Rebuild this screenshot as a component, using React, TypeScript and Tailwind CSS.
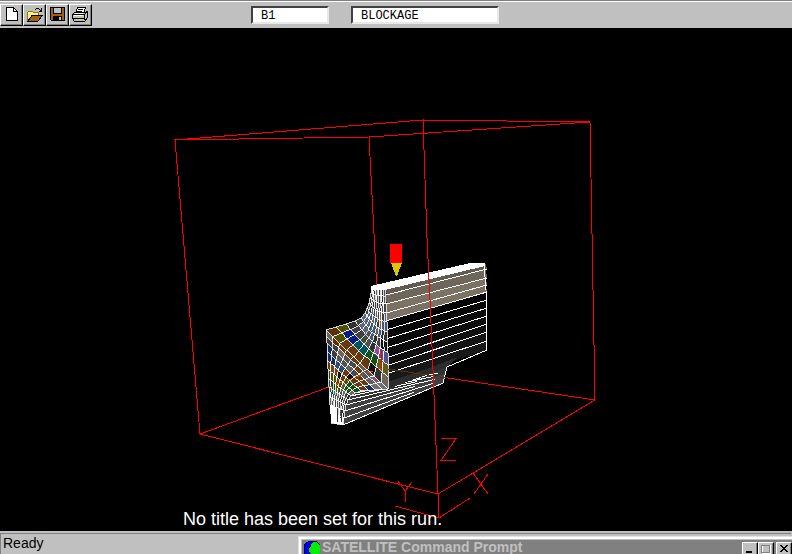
import type { ReactNode } from 'react';

type Point = [number, number];

const lerp = (a: Point, b: Point, t: number): Point => [a[0] + (b[0] - a[0]) * t, a[1] + (b[1] - a[1]) * t];
const toPoints = (points: Point[]) => points.map((p) => p[0].toFixed(1) + ',' + p[1].toFixed(1)).join(' ');

// Walks a polyline by index, so that equal steps fall between its knots.
function along(knots: Point[], t: number): Point {
  const place = t * (knots.length - 1);
  const index = Math.min(Math.floor(place), knots.length - 2);
  return lerp(knots[index], knots[index + 1], place - index);
}

// Outer and inner walls of the curved end face, from the top stub to the foot.
const outerWall: Point[] = [
  [371, 288], [371, 293], [370, 298], [369, 303], [367, 308], [365, 313], [361, 318], [355, 321], [346, 324], [336, 327],
  [326, 330], [326, 336], [327, 343], [327, 351], [327, 360], [328, 369], [328, 378], [329, 387], [329, 396], [330, 405],
  [331, 414], [331, 423],
];
const innerWall: Point[] = [
  [385, 288], [385, 296], [386, 304], [386, 313], [387, 322], [387, 332], [387, 342], [388, 353], [388, 365], [388, 377],
  [388, 389], [382, 389], [375, 390], [368, 390], [361, 391], [355, 393], [351, 396], [348, 400], [346, 405], [345, 411],
  [344, 418], [343, 425],
];

const ROWS = 21;
const COLUMNS = 9;

const cellColours: string[][] = [
  ['#303030', '#505050', '#303030', '#606060', '#404040', '#303030', '#505050', '#303030', '#505050'],
  ['#303030', '#404040', '#606060', '#404040', '#505050', '#303030', '#505050', '#303030', '#505050'],
  ['#303030', '#505050', '#303030', '#404040', '#303030', '#505050', '#303030', '#505050', '#404040'],
  ['#505050', '#303030', '#586478', '#404040', '#606060', '#404040', '#8a6238', '#404040', '#586478'],
  ['#404040', '#586478', '#405878', '#586478', '#505050', '#404040', '#8a6238', '#405878', '#405878'],
  ['#586478', '#586478', '#586478', '#405878', '#405878', '#606060', '#405878', '#303030', '#303030'],
  ['#404040', '#586478', '#586478', '#505050', '#405878', '#303030', '#404040', '#101010', '#101010'],
  ['#303030', '#404040', '#404040', '#48483c', '#505050', '#303030', '#8a509a', '#56508a', '#56508a'],
  ['#505000', '#081c80', '#081c80', '#005462', '#005462', '#105018', '#105018', '#5e5e18', '#5e5e18'],
  ['#5a3008', '#505000', '#643810', '#643810', '#643810', '#643810', '#101010', '#303030', '#6e665a'],
  ['#6e665a', '#5a3008', '#643810', '#643810', '#643810', '#6a5848', '#545454', '#8a5078', '#707070'],
  ['#3c3c3c', '#3c3c3c', '#6e665a', '#505050', '#484848', '#643810', '#545454', '#606060', '#707070'],
  ['#102c58', '#3c3c3c', '#545454', '#505050', '#606060', '#484848', '#643810', '#643810', '#102c58'],
  ['#102c58', '#102c58', '#304a6c', '#304a6c', '#643810', '#101010', '#643810', '#643810', '#643810'],
  ['#643810', '#704418', '#704418', '#101010', '#643810', '#505000', '#105018', '#105018', '#105018'],
  ['#105018', '#643810', '#505000', '#505000', '#643810', '#5e5e30', '#105018', '#105018', '#6e665a'],
  ['#204848', '#105018', '#105018', '#505000', '#505000', '#306060', '#6e665a', '#404040', '#202020'],
  ['#204848', '#204848', '#306060', '#306060', '#6e665a', '#404040', '#303030', '#505050', '#303030'],
  ['#6e665a', '#505050', '#6e665a', '#404040', '#505050', '#404040', '#303030', '#505050', '#404040'],
  ['#ffffff', '#6e665a', '#404040', '#505050', '#404040', '#303030', '#505050', '#303030', '#303030'],
  ['#ffffff', '#ffffff', '#ffffff', '#606060', '#ffffff', '#505050', '#303030', '#505050', '#ffffff'],
];

function meshPoint(row: number, column: number): Point {
  const t = row / ROWS;
  const s = column / COLUMNS;
  const p = lerp(along(outerWall, t), along(innerWall, t), s);
  // Above the corner the lines sag toward the inside of the bend.
  const sag = Math.max(0, Math.sin(2 * Math.PI * t)) * Math.sin(Math.PI * s) * 3;
  return [p[0] - sag * 0.3, p[1] + sag];
}

function EndFace() {
  const cells: ReactNode[] = [];
  for (let row = 0; row < ROWS; row++) {
    for (let column = 0; column < COLUMNS; column++) {
      cells.push(
        <polygon
          key={row * COLUMNS + column}
          points={toPoints([
            meshPoint(row, column),
            meshPoint(row, column + 1),
            meshPoint(row + 1, column + 1),
            meshPoint(row + 1, column),
          ])}
          fill={cellColours[row][column]}
        />,
      );
    }
  }
  return (
    <g stroke="#fff" strokeWidth="0.8">
      {cells}
    </g>
  );
}

const sideLeft: number[] = [288, 295, 304, 313, 321, 330, 339, 348, 358, 366, 374, 383];
const sideRight: number[] = [264, 269, 278, 285, 292, 300, 308, 316, 324, 332, 341, 350];
const sideColours = ['#605a50', '#6e665a', '#7b7164', '#7b7164', '#000', '#070707', '#0a0a0a', '#0d0d0d', '#101010', '#141414', '#181818'];

function SideFace() {
  return (
    <g>
      {sideColours.map((colour, i) => (
        <polygon
          key={i}
          points={toPoints([[385, sideLeft[i]], [486, sideRight[i]], [487, sideRight[i + 1]], [387, sideLeft[i + 1]]])}
          fill={colour}
        />
      ))}
      <polygon points="388,389 388,382 432,367 458,357 447,367" fill="#2c2c2c" />
      {sideLeft.slice(1, 11).map((y, i) => (
        <line key={y} x1="386" y1={y} x2="487" y2={sideRight[i + 1]} stroke="#fff" />
      ))}
      <polyline points="484,264 486,290 487,350 447,367 443,383" fill="none" stroke="#fff" />
    </g>
  );
}

function Foot() {
  return (
    <g>
      <polygon points={toPoints([...innerWall.slice(10), [443, 383], [447, 367]])} fill="#404040" />
      <polygon points="388,389 400,384 447,367 446,373 356,404 350,397 364,390" fill="#323232" />
      {innerWall.slice(13).map((p, i) => {
        const reach = i === 8 ? 1 : i % 2 ? 0.7 : 0.9;
        const end = lerp(p, [446 - i / 3, 371 + i * 1.5], reach);
        return <line key={i} x1={p[0]} y1={p[1]} x2={end[0]} y2={end[1]} stroke="#fff" />;
      })}
    </g>
  );
}

function Scene() {
  return (
    <svg viewBox="0 28 792 503" className="block h-auto w-full" shapeRendering="crispEdges" role="img" aria-label="Blockage B1">
      <g fill="none" stroke="#f00">
        <polyline points="175,140 423,120 590,122 369,137 175,140 200,434 438,494 595,400 590,122" />
        <polyline points="369,137 381,368 200,434" />
        <line x1="381" y1="368" x2="595" y2="400" />
      </g>
      <Foot />
      <SideFace />
      <EndFace />
      <polygon points="371,286 470,263 485,263 485,266 385,290 371,290" fill="#fff" />
      <polygon points="330,405 335,407 343,425 331,423" fill="#fff" />
      <g stroke="#303030">
        <line x1="337" y1="410" x2="338" y2="422" />
        <line x1="341" y1="410" x2="341" y2="422" />
      </g>
      <g fill="none">
        <line x1="326" y1="388" x2="381" y2="368" stroke="#f04010" strokeDasharray="6 5" />
        <line x1="381" y1="350" x2="381" y2="368" stroke="#f00" />
        <line x1="388" y1="369" x2="447" y2="378" stroke="#5c3010" />
        <polyline points="423,120 427,238 430,300 433,370 438,494 439,518" stroke="#f00" />
        <polyline points="395,506 439,518 470,498" stroke="#f00" />
        <path d="M398 481 405 491 412 482M405 491V502M441 438.5H456L441 460.5H456M473 473 488 494M488 474 474 494" stroke="#f00" />
      </g>
      <rect x="390" y="244" width="12" height="19" fill="#f00" />
      <path d="M391 263H402L397 276H396Z" fill="#dcc800" />
    </svg>
  );
}

function ToolButton({ label, children }: { label: string; children: ReactNode }) {
  return (
    <button
      type="button"
      aria-label={label}
      className="h-[22px] w-[23px] border border-t-white border-r-black border-b-black border-l-white bg-[#c0c0c0] shadow-[inset_-1px_-1px_#808080]"
    >
      <svg viewBox="0 0 21 20" className="h-5 w-[21px]" shapeRendering="crispEdges" aria-hidden="true">
        {children}
      </svg>
    </button>
  );
}

function Toolbar() {
  const field =
    "h-[18px] min-w-0 border-2 border-t-[#404040] border-r-[#e8e8e8] border-b-[#e8e8e8] border-l-[#404040] bg-white px-2 pt-0.5 font-['Liberation_Mono','Courier_New',monospace] text-xs leading-3 text-black outline-none";
  return (
    <header className="flex h-7 items-center border-t border-[#808080] bg-[#c0c0c0] shadow-[inset_0_1px_#fff]">
      <div className="flex">
        <ToolButton label="New">
          <path d="M5.500 2.500H12.500L16.500 6.500V15.500H5.500Z" fill="#fff" stroke="#000" />
          <path d="M12.500 2.500V6.500H16.500" fill="none" stroke="#000" />
        </ToolButton>
        <ToolButton label="Open">
          <path d="M3.500 15.500V7.500L4.500 6.500H8.500L9.500 7.500H14.500V10.500" fill="#fff080" stroke="#808000" />
          <path d="M4 16 8 10.500H18.500L14 16Z" fill="#a06018" stroke="#000" />
          <path d="M11 4.500H12M12 3.500H15M15 4.500H16M16 5.500H18M17.500 3V6M15 6.500H18" fill="none" stroke="#000" />
        </ToolButton>
        <ToolButton label="Save">
          <path d="M3.500 2.500H17.500V15.500H4.500L3.500 14.500Z" fill="#a05c18" stroke="#000" />
          <rect x="7" y="3" width="7" height="5" fill="#c0c0c0" />
          <path d="M6.500 3V8.500H14.500V3" fill="none" stroke="#000" />
          <rect x="6" y="11" width="9" height="4" fill="#000" />
          <rect x="12" y="12" width="2" height="3" fill="#c0c0c0" />
        </ToolButton>
        <ToolButton label="Print">
          <path d="M5.500 8.500 7.500 2.500H15.500L13.500 8.500Z" fill="#fff" stroke="#000" />
          <path d="M8 4.500H13M7 6.500H12" stroke="#000" />
          <path d="M2.500 9.500 4.500 7.500H15.500L17.500 6.500V12.500L14.500 16.500H4.500L2.500 13.500Z" fill="#c0c0c0" stroke="#000" />
          <path d="M3 9.500H14.500V15M3 13.500H14M14.500 9.500 17 7" fill="none" stroke="#000" />
          <path d="M5 8.500H13M4 10.500H13" stroke="#fff" />
          <rect x="9" y="12" width="3" height="1" fill="#e0d000" />
        </ToolButton>
      </div>
      <input aria-label="Object name" defaultValue="B1" className={field + ' ml-[159px] w-[78px]'} />
      <input aria-label="Object type" defaultValue="BLOCKAGE" className={field + ' ml-[22px] w-[148px]'} />
    </header>
  );
}

function WindowButton({ label, children }: { label: string; children: ReactNode }) {
  return (
    <button
      type="button"
      aria-label={label}
      className="block h-[14px] w-4 border border-t-white border-r-black border-b-black border-l-white bg-[#c0c0c0] shadow-[inset_-1px_-1px_#808080]"
    >
      <svg viewBox="0 0 14 12" className="h-3 w-3.5" shapeRendering="crispEdges" aria-hidden="true">
        {children}
      </svg>
    </button>
  );
}

function CommandPrompt() {
  return (
    <section className="absolute top-[5px] right-0 left-[298px] h-[30px] border-t border-l border-[#e0e0e0] bg-[#c0c0c0] pt-[3px] pl-[3px] shadow-[inset_2px_2px_#fff]">
      <div className="flex h-[18px] items-start bg-[#808080] pl-px">
        <svg viewBox="0 0 18 18" className="size-[18px] shrink-0" shapeRendering="crispEdges" aria-hidden="true">
          <path d="M6 1H13L16 4V7H13L11 5H8L6 8V11L8 14H15L13 17H5L1 13V5Z" fill="#0000f0" stroke="#000060" />
          <path d="M8 4 11 2H14L17 6V13L14 15H10L6 12V8H8Z" fill="#00f000" />
        </svg>
        <h2 className="flex-1 pl-px text-sm leading-[14px] font-bold whitespace-nowrap text-[#c0c0c0]">SATELLITE Command Prompt</h2>
        <div className="flex pt-0.5">
          <WindowButton label="Minimize">
            <rect x="3" y="8" width="6" height="2" fill="#000" />
          </WindowButton>
          <WindowButton label="Maximize">
            <rect x="3" y="2" width="8" height="8" fill="none" stroke="#fff" />
            <path d="M2.500 10V2H10.500V9.500H2.500" fill="none" stroke="#808080" />
          </WindowButton>
          <div className="pl-0.5">
            <WindowButton label="Close">
              <path d="M3 2H5V3H6V4H8V3H9V2H11V3H10V4H9V5H8V6H9V7H10V8H11V9H9V8H8V7H6V8H5V9H3V8H4V7H5V6H6V5H5V4H4V3H3Z" fill="#000" />
            </WindowButton>
          </div>
        </div>
      </div>
    </section>
  );
}

export default function App() {
  return (
    <div className="flex h-screen flex-col overflow-hidden bg-black font-['Liberation_Sans',Arial,sans-serif]">
      <Toolbar />
      <main className="relative min-h-0 flex-1 overflow-hidden bg-black">
        <Scene />
        <p className="absolute bottom-0.5 left-[183px] text-lg leading-5 whitespace-nowrap text-white">No title has been set for this run.</p>
      </main>
      <footer className="relative h-[23px] shrink-0 overflow-hidden border-t-2 border-[#c0c0c0] bg-[#c0c0c0]">
        <div className="mr-px h-[21px] border-t border-l border-[#808080] pl-0.5 text-sm leading-[19px] text-black">Ready</div>
        <div className="absolute inset-x-0 -top-0.5 h-[23px]">
          <CommandPrompt />
        </div>
      </footer>
    </div>
  );
}
